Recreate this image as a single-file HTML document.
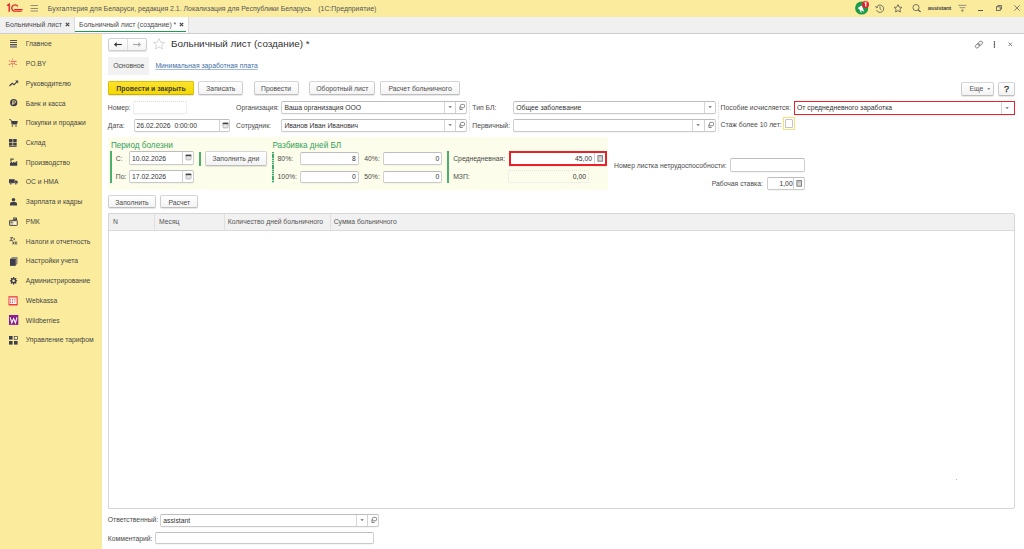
<!DOCTYPE html>
<html><head><meta charset="utf-8">
<style>
*{box-sizing:border-box;margin:0;padding:0}
html,body{width:1024px;height:549px;overflow:hidden;background:#fff;font-family:"Liberation Sans",sans-serif;position:relative}
.a{position:absolute}
.t{position:absolute;white-space:nowrap;font-size:6.8px;line-height:8px;color:#4a4a4a}
.inp{position:absolute;background:#fff;border:1px solid;border-color:#bdbdbd #cfcfcf #cacaca #cfcfcf;border-radius:2px;box-shadow:0 0.6px 0 rgba(0,0,0,.07)}
.inp .v{position:absolute;left:2px;top:0;bottom:0;display:flex;align-items:center;font-size:6.8px;color:#333;white-space:nowrap}
.inp .r{position:absolute;right:2px;top:0;bottom:0;display:flex;align-items:center;font-size:6.8px;color:#333;white-space:nowrap}
.btn{position:absolute;background:linear-gradient(#fff,#f3f3f3);border:1px solid;border-color:#d6d6d6 #cdcdcd #bdbdbd;border-radius:2px;box-shadow:0 1px 1px rgba(0,0,0,.10);display:flex;align-items:center;justify-content:center;font-size:6.8px;color:#4d4d4d;white-space:nowrap;padding-top:0.8px}
.sb{position:absolute;left:25.8px;font-size:6.77px;color:#454545;white-space:nowrap;line-height:8px}
.ic{position:absolute}

.dd{position:absolute;top:0;bottom:0;width:11px;border-left:1px solid #d6d6d6}
.op{position:absolute;top:0;bottom:0;width:11px;border-left:1px solid #d2d2d2}
.cal{position:absolute;top:0;bottom:0;width:11px;border-left:1px solid #d2d2d2}
.calc{position:absolute;top:0;bottom:0;width:11px;border-left:1px solid #d2d2d2}
.dsep{width:1px;background:repeating-linear-gradient(#dcdcdc 0 1.2px,transparent 1.2px 2.2px)}
.gbar{width:1.6px;background:#4caf6e}
.gdash{width:1.5px;background:repeating-linear-gradient(#46a96b 0 1.5px,#b9dcc4 1.5px 2.2px)}

</style></head><body>
<!-- header -->
<div class="a" style="left:0;top:0;width:1024px;height:16.5px;background:#fbec9d"></div>
<div class="t" style="left:47.8px;top:4.6px;color:#555;font-size:6.95px">Бухгалтерия для Беларуси, редакция 2.1. Локализация для Республики Беларусь</div><div class="t" style="left:318.3px;top:4.6px;color:#555;font-size:6.93px">(1С:Предприятие)</div>
<!-- tab bar -->
<div class="a" style="left:0;top:16.5px;width:1024px;height:17px;background:#f0f0f0;border-bottom:1px solid #cfcfcf"></div>
<div class="t" style="left:5.5px;top:20.7px;color:#4a4a4a;font-size:6.93px">Больничный лист</div>
<div class="a" style="left:74px;top:16.5px;width:115px;height:16.5px;background:#fff;border-left:1px solid #dcdcdc;border-right:1px solid #dcdcdc"></div>
<div class="t" style="left:79.1px;top:20.7px;color:#4a4a4a;font-size:6.93px">Больничный лист (создание) *</div>
<div class="a" style="left:75.2px;top:30.7px;width:111px;height:1.2px;background:#1f9a4a"></div>
<!-- sidebar -->
<div class="a" style="left:0;top:33.5px;width:101.5px;height:516px;background:#fbec9d"></div>
<div class="sb" style="top:40.30px">Главное</div>
<div class="sb" style="top:60.04px">РО.BY</div>
<div class="sb" style="top:79.78px">Руководителю</div>
<div class="sb" style="top:99.52px">Банк и касса</div>
<div class="sb" style="top:119.26px">Покупки и продажи</div>
<div class="sb" style="top:139.00px">Склад</div>
<div class="sb" style="top:158.74px">Производство</div>
<div class="sb" style="top:178.48px">ОС и НМА</div>
<div class="sb" style="top:198.22px">Зарплата и кадры</div>
<div class="sb" style="top:217.96px">РМК</div>
<div class="sb" style="top:237.70px">Налоги и отчетность</div>
<div class="sb" style="top:257.44px">Настройки учета</div>
<div class="sb" style="top:277.18px">Администрирование</div>
<div class="sb" style="top:296.92px">Webkassa</div>
<div class="sb" style="top:316.66px">Wildberries</div>
<div class="sb" style="top:336.40px">Управление тарифом</div>

<!-- FORM -->
<div class="a" style="left:108px;top:38.2px;width:39px;height:12.4px;border:1px solid #cfcfcf;border-radius:2px;background:linear-gradient(#fff,#f3f3f3);box-shadow:0 1px 1px rgba(0,0,0,.12)"></div>
<div class="a" style="left:127.3px;top:39.2px;width:1px;height:10.5px;background:#dedede"></div>
<div class="a" style="left:171px;top:38.2px;font-size:9.9px;color:#333;white-space:nowrap;line-height:11px">Больничный лист (создание) *</div>

<div class="a" style="left:108px;top:57px;width:41px;height:17.7px;background:#f2f2f2"></div>
<div class="t" style="left:113.2px;top:62px">Основное</div>
<div class="t" style="left:155.4px;top:62px;color:#3f6fa6;text-decoration:underline;text-decoration-color:#a3bcd8;text-underline-offset:1px">Минимальная заработная плата</div>

<div class="btn" style="left:108px;top:81.4px;width:86px;height:14px;background:linear-gradient(#fce22e,#f4d800);border-color:#dcc100 #dcc100 #c9af00;border-radius:1.5px;color:#3d3d3d;font-weight:bold;font-size:6.93px;padding-top:0.6px">Провести и закрыть</div>
<div class="btn" style="left:198.4px;top:81.4px;width:44.8px;height:14px">Записать</div>
<div class="btn" style="left:253.5px;top:81.4px;width:45.2px;height:14px">Провести</div>
<div class="btn" style="left:309.2px;top:81.4px;width:66.3px;height:14px">Оборотный лист</div>
<div class="btn" style="left:380.4px;top:81.4px;width:79.3px;height:14px">Расчет больничного</div>
<div class="btn" style="left:961px;top:81.6px;width:32.7px;height:14px;justify-content:flex-start;padding-left:7.5px;color:#555">Еще<svg width="6" height="4" viewBox="0 0 6 4" style="margin-left:3px"><path d="M1.4 1.2 H4.2 L2.8 2.8 Z" fill="#555"/></svg></div>
<div class="btn" style="left:998px;top:81.6px;width:16.8px;height:14px;font-size:9px;color:#222;-webkit-text-stroke:0.25px #222">?</div>


<!-- row 1 -->
<div class="t" style="left:107.8px;top:103.7px">Номер:</div>
<div class="inp" style="left:133.4px;top:101.1px;width:53.8px;height:13.2px;border:1px dotted #dedede"></div>
<div class="t" style="left:236.1px;top:103.7px">Организация:</div>
<div class="inp" style="left:281.4px;top:101.3px;width:185.6px;height:13px"><span class="v">Ваша организация ООО</span><i class="dd" style="left:161.8px"><svg width="11" height="13" viewBox="0 0 11 13" style="position:absolute;left:0;top:50%;margin-top:-6.5px"><path d="M3.4 5.2 H6.9 L5.15 7.1 Z" fill="#666"/></svg></i><i class="op" style="left:172.8px"><svg width="11" height="13" viewBox="0 0 11 13" style="position:absolute;left:0;top:50%;margin-top:-6.5px"><rect x="4.6" y="3.4" width="3.9" height="3.3" rx="0.9" fill="none" stroke="#6a6a6a" stroke-width="0.8"/><path d="M3.9 5.4 V8.4 H6.6" fill="none" stroke="#6a6a6a" stroke-width="0.9"/></svg></i></div>
<div class="a dsep" style="left:468.8px;top:101px;height:31px"></div>
<div class="t" style="left:472.3px;top:103.7px">Тип БЛ:</div>
<div class="inp" style="left:513.3px;top:101px;width:203px;height:13.3px"><span class="v">Общее заболевание</span><i class="dd" style="left:189.6px"><svg width="11" height="13" viewBox="0 0 11 13" style="position:absolute;left:0;top:50%;margin-top:-6.5px"><path d="M3.4 5.2 H6.9 L5.15 7.1 Z" fill="#666"/></svg></i></div>
<div class="a dsep" style="left:718px;top:101px;height:31px"></div>
<div class="t" style="left:720.6px;top:103.7px">Пособие исчисляется:</div>
<div class="inp" style="left:794px;top:101px;width:220.8px;height:14.2px;border:1.8px solid #e8212a;border-radius:0"><span class="v" style="top:-1px">От среднедневного заработка</span><i class="dd" style="left:206.2px"><svg width="11" height="13" viewBox="0 0 11 13" style="position:absolute;left:0;top:50%;margin-top:-6.5px"><path d="M3.4 5.2 H6.9 L5.15 7.1 Z" fill="#666"/></svg></i></div>
<!-- row 2 -->
<div class="t" style="left:107.8px;top:121.7px">Дата:</div>
<div class="inp" style="left:133.6px;top:119.4px;width:96.9px;height:12.8px"><span class="v">26.02.2026 &nbsp;0:00:00</span><i class="cal" style="left:84.5px"><svg width="11" height="13" viewBox="0 0 11 13" style="position:absolute;left:0;top:50%;margin-top:-6.5px"><rect x="2.9" y="3.9" width="5.2" height="5" rx="0.8" fill="#e6e6e6" stroke="#999" stroke-width="0.6"/><rect x="2.7" y="3.7" width="5.6" height="1.5" fill="#444"/></svg></i></div>
<div class="t" style="left:236.1px;top:121.7px">Сотрудник:</div>
<div class="inp" style="left:281.4px;top:119.3px;width:185.6px;height:13px"><span class="v">Иванов Иван Иванович</span><i class="dd" style="left:161.8px"><svg width="11" height="13" viewBox="0 0 11 13" style="position:absolute;left:0;top:50%;margin-top:-6.5px"><path d="M3.4 5.2 H6.9 L5.15 7.1 Z" fill="#666"/></svg></i><i class="op" style="left:172.8px"><svg width="11" height="13" viewBox="0 0 11 13" style="position:absolute;left:0;top:50%;margin-top:-6.5px"><rect x="4.6" y="3.4" width="3.9" height="3.3" rx="0.9" fill="none" stroke="#6a6a6a" stroke-width="0.8"/><path d="M3.9 5.4 V8.4 H6.6" fill="none" stroke="#6a6a6a" stroke-width="0.9"/></svg></i></div>
<div class="t" style="left:472.3px;top:121.7px">Первичный:</div>
<div class="inp" style="left:513.3px;top:119.3px;width:203.2px;height:13px"><i class="dd" style="left:178px"><svg width="11" height="13" viewBox="0 0 11 13" style="position:absolute;left:0;top:50%;margin-top:-6.5px"><path d="M3.4 5.2 H6.9 L5.15 7.1 Z" fill="#666"/></svg></i><i class="op" style="left:189.6px"><svg width="11" height="13" viewBox="0 0 11 13" style="position:absolute;left:0;top:50%;margin-top:-6.5px"><rect x="4.6" y="3.4" width="3.9" height="3.3" rx="0.9" fill="none" stroke="#6a6a6a" stroke-width="0.8"/><path d="M3.9 5.4 V8.4 H6.6" fill="none" stroke="#6a6a6a" stroke-width="0.9"/></svg></i></div>
<div class="t" style="left:720.6px;top:120.6px">Стаж более 10 лет:</div>
<div class="a" style="left:783px;top:117.3px;width:12px;height:12.6px;border:1px solid #f7df78;border-radius:0;background:#fff"></div>
<div class="a" style="left:785px;top:119.3px;width:8px;height:8.4px;border:1px solid #c4c4c4;border-radius:1px;background:#fff"></div>

<!-- group -->
<div class="a" style="left:107.9px;top:137.4px;width:500px;height:52.6px;background:#fdfdeb"></div>
<div class="a" style="left:110.9px;top:140.6px;font-size:8.18px;line-height:9px;color:#34a05a;white-space:nowrap">Период болезни</div>
<div class="a gbar" style="left:110.2px;top:151.4px;height:31.3px"></div>
<div class="t" style="left:115.8px;top:154.6px">С:</div>
<div class="inp" style="left:129px;top:151.4px;width:65px;height:13.2px"><span class="v" style="top:0.8px">10.02.2026</span><i class="cal" style="left:52.3px"><svg width="11" height="13" viewBox="0 0 11 13" style="position:absolute;left:0;top:50%;margin-top:-6.5px"><rect x="2.9" y="3.9" width="5.2" height="5" rx="0.8" fill="#e6e6e6" stroke="#999" stroke-width="0.6"/><rect x="2.7" y="3.7" width="5.6" height="1.5" fill="#444"/></svg></i></div>
<div class="t" style="left:115.8px;top:172.6px">По:</div>
<div class="inp" style="left:129px;top:170px;width:65px;height:12.7px"><span class="v">17.02.2026</span><i class="cal" style="left:52.3px"><svg width="11" height="13" viewBox="0 0 11 13" style="position:absolute;left:0;top:50%;margin-top:-6.5px"><rect x="2.9" y="3.9" width="5.2" height="5" rx="0.8" fill="#e6e6e6" stroke="#999" stroke-width="0.6"/><rect x="2.7" y="3.7" width="5.6" height="1.5" fill="#444"/></svg></i></div>
<div class="a gbar" style="left:199.3px;top:152px;height:14px"></div>
<div class="btn" style="left:205.1px;top:151.4px;width:61.5px;height:14.3px">Заполнить дни</div>

<div class="a" style="left:272.4px;top:140.6px;font-size:8.18px;line-height:9px;color:#34a05a;white-space:nowrap">Разбивка дней БЛ</div>
<div class="a gdash" style="left:272.2px;top:151.9px;height:31px"></div>
<div class="t" style="left:277.6px;top:154.6px">80%:</div>
<div class="inp" style="left:300.3px;top:151.9px;width:58.4px;height:12.8px"><span class="r">8</span></div>
<div class="t" style="left:277.6px;top:172.7px">100%:</div>
<div class="inp" style="left:300.3px;top:170.5px;width:58.4px;height:12.4px"><span class="r">0</span></div>
<div class="t" style="left:364.3px;top:154.6px">40%:</div>
<div class="inp" style="left:383.4px;top:151.9px;width:58.8px;height:12.8px"><span class="r">0</span></div>
<div class="t" style="left:364.3px;top:172.7px">50%:</div>
<div class="inp" style="left:383.4px;top:170.5px;width:58.8px;height:12.4px"><span class="r">0</span></div>

<div class="a gbar" style="left:447.4px;top:151.4px;height:31.6px"></div>
<div class="t" style="left:453.2px;top:154.6px">Среднедневная:</div>
<div class="inp" style="left:508.6px;top:150.9px;width:98px;height:15.6px;border:2px solid #e8212a;border-radius:0"><span class="r" style="right:12.6px">45,00</span><i class="calc" style="left:83.4px"><svg width="11" height="13" viewBox="0 0 11 13" style="position:absolute;left:0;top:50%;margin-top:-6.5px"><rect x="2.9" y="3.6" width="4.6" height="5.6" fill="#d8d8d8" stroke="#777" stroke-width="0.9"/><path d="M3.8 5 H6.6" stroke="#999" stroke-width="0.6"/></svg></i></div>
<div class="t" style="left:453.2px;top:172.5px">МЗП:</div>
<div class="inp" style="left:508.2px;top:170.2px;width:80.8px;height:12.5px;border:1px dotted #e2e2e2;background:#fdfdeb;box-shadow:none"><span class="r">0,00</span></div>

<div class="t" style="left:614px;top:161.8px">Номер листка нетрудоспособности:</div>
<div class="inp" style="left:730px;top:158.3px;width:74.7px;height:13.6px"></div>
<div class="t" style="left:711.7px;top:179.7px">Рабочая ставка:</div>
<div class="inp" style="left:767.1px;top:177.2px;width:37.6px;height:12.9px"><span class="r" style="right:11px">1,00</span><i class="calc" style="left:25.0px"><svg width="11" height="13" viewBox="0 0 11 13" style="position:absolute;left:0;top:50%;margin-top:-6.5px"><rect x="2.9" y="3.6" width="4.6" height="5.6" fill="#d8d8d8" stroke="#777" stroke-width="0.9"/><path d="M3.8 5 H6.6" stroke="#999" stroke-width="0.6"/></svg></i></div>

<div class="btn" style="left:107.8px;top:195.3px;width:48.3px;height:13.1px;padding-top:0.6px">Заполнить</div>
<div class="btn" style="left:160.3px;top:195.3px;width:38px;height:13.1px;padding-top:0.6px">Расчет</div>

<!-- table -->
<div class="a" style="left:108px;top:213.4px;width:906.6px;height:295.4px;border:1px solid #d6d6d6;border-radius:0 2px 2px 0;background:#fff"></div>
<div class="a" style="left:109px;top:214.4px;width:904.6px;height:16.4px;background:#f1f1f1;border-bottom:1px solid #dadada"></div>
<div class="a" style="left:154.4px;top:214.4px;width:1px;height:16px;background:#e0e0e0"></div>
<div class="a" style="left:223.5px;top:214.4px;width:1px;height:16px;background:#e0e0e0"></div>
<div class="a" style="left:329.7px;top:214.4px;width:1px;height:16px;background:#e0e0e0"></div>
<div class="t" style="left:113px;top:217.7px;color:#555">N</div>
<div class="t" style="left:159px;top:217.7px;color:#555">Месяц</div>
<div class="t" style="left:227.8px;top:217.7px;color:#555">Количество дней больничного</div>
<div class="t" style="left:333.7px;top:217.7px;color:#555">Сумма больничного</div>
<div class="a" style="left:956px;top:479px;width:1px;height:1px;background:#bbb"></div>

<div class="t" style="left:107.8px;top:516px">Ответственный:</div>
<div class="inp" style="left:160.3px;top:513.7px;width:218.7px;height:12.9px"><span class="v">assistant</span><i class="dd" style="left:195.0px"><svg width="11" height="13" viewBox="0 0 11 13" style="position:absolute;left:0;top:50%;margin-top:-6.5px"><path d="M3.4 5.2 H6.9 L5.15 7.1 Z" fill="#666"/></svg></i><i class="op" style="left:206.0px"><svg width="11" height="13" viewBox="0 0 11 13" style="position:absolute;left:0;top:50%;margin-top:-6.5px"><rect x="4.6" y="3.4" width="3.9" height="3.3" rx="0.9" fill="none" stroke="#6a6a6a" stroke-width="0.8"/><path d="M3.9 5.4 V8.4 H6.6" fill="none" stroke="#6a6a6a" stroke-width="0.9"/></svg></i></div>
<div class="t" style="left:107.8px;top:534.6px">Комментарий:</div>
<div class="inp" style="left:155.3px;top:531.9px;width:218.7px;height:12.5px"></div>

<!-- 1C logo -->
<svg class="ic" style="left:6px;top:3px" width="18" height="10" viewBox="0 0 18 10">
<path d="M1.2 2.6 L3.2 1.2 L3.2 8.8" fill="none" stroke="#e3202c" stroke-width="1.4"/>
<path d="M11.8 3.3 A3.3 3.3 0 1 0 8.3 8.3" fill="none" stroke="#e3202c" stroke-width="1.3"/>
<path d="M8.2 6.6 H16.6 M8.2 8.3 H15.8" stroke="#e3202c" stroke-width="1.1"/>
</svg>
<!-- hamburger -->
<svg class="ic" style="left:29.5px;top:4px" width="9" height="9" viewBox="0 0 9 9">
<path d="M0.5 1.5H8M0.5 4.5H8M0.5 7H8" stroke="#8b826a" stroke-width="0.9"/>
</svg>
<!-- header right icons -->
<svg class="ic" style="left:854px;top:0px" width="16" height="16" viewBox="0 0 16 16">
<circle cx="7.7" cy="8" r="6.6" fill="#1e9a4a"/>
<path d="M3.6 8 L7.8 5.6 L10.2 11.8 L5.6 9.8 Z" fill="#fff"/>
<path d="M6.4 10 L7.2 12.6" stroke="#fff" stroke-width="1"/>
<circle cx="11.5" cy="4.5" r="3.5" fill="#e4202c"/>
<path d="M10.7 3.3 L11.8 2.4 V6.6" stroke="#fff" stroke-width="1.2" fill="none"/>
</svg>
<svg class="ic" style="left:875px;top:4px" width="10" height="9" viewBox="0 0 10 9">
<path d="M1.6 3.2 A3.7 3.7 0 1 1 1.5 6" fill="none" stroke="#555" stroke-width="0.8"/>
<path d="M0.6 2.2 L1.5 3.8 L3 3" fill="none" stroke="#555" stroke-width="0.8"/>
<path d="M5 2.3 V4.8 L6.4 6.1" fill="none" stroke="#555" stroke-width="0.8"/>
</svg>
<svg class="ic" style="left:893px;top:3.8px" width="10" height="9" viewBox="0 0 10 9">
<path d="M5 0.6 L6.2 3.1 L8.9 3.4 L6.9 5.2 L7.4 8 L5 6.6 L2.6 8 L3.1 5.2 L1.1 3.4 L3.8 3.1 Z" fill="none" stroke="#555" stroke-width="0.8" stroke-linejoin="round"/>
</svg>
<svg class="ic" style="left:911.5px;top:4.3px" width="10" height="9" viewBox="0 0 10 9">
<circle cx="4" cy="3.6" r="3.1" fill="none" stroke="#555" stroke-width="0.8"/>
<path d="M6.2 5.8 L8.6 7.8" stroke="#444" stroke-width="1.1"/>
</svg>
<div class="a" style="left:927.7px;top:3.6px;font-size:6px;font-weight:bold;line-height:8px;letter-spacing:-0.3px;color:#4a4a4a;white-space:nowrap">assistant</div>
<svg class="ic" style="left:957.5px;top:4px" width="9" height="9" viewBox="0 0 9 9">
<path d="M0.4 1.3H8.4M1.6 3.7H7.2M3.4 6H5.4" stroke="#777" stroke-width="0.8"/>
<rect x="3.6" y="6.4" width="1.6" height="1" fill="#444"/>
</svg>
<div class="a" style="left:978px;top:9.8px;width:5px;height:0.9px;background:#555"></div>
<svg class="ic" style="left:995.5px;top:5.3px" width="6" height="6" viewBox="0 0 6 6">
<rect x="0.5" y="1.8" width="3.7" height="3.7" fill="none" stroke="#555" stroke-width="0.8"/>
<path d="M1.8 1.8 V0.5 H5.5 V4.2 H4.2" fill="none" stroke="#555" stroke-width="0.8"/>
</svg>
<svg class="ic" style="left:1013.5px;top:5.2px" width="6" height="6" viewBox="0 0 6 6">
<path d="M0.3 0.3 L5.7 5.7 M5.7 0.3 L0.3 5.7" stroke="#666" stroke-width="0.8"/>
</svg>
<!-- tab close -->
<svg class="ic" style="left:64.6px;top:22.4px" width="5" height="5" viewBox="0 0 5 5">
<path d="M0.8 0.8 L4.2 4.2 M4.2 0.8 L0.8 4.2" stroke="#444" stroke-width="1.2"/>
</svg>
<svg class="ic" style="left:179.4px;top:22.4px" width="5" height="5" viewBox="0 0 5 5">
<path d="M0.8 0.8 L4.2 4.2 M4.2 0.8 L0.8 4.2" stroke="#444" stroke-width="1.2"/>
</svg>

<!-- sidebar icons -->
<svg class="ic" style="left:10px;top:40px" width="8" height="8" viewBox="0 0 8 8">
<path d="M0 0.5H7M0 2.5H7M0 4.5H7" stroke="#3e3d4e" stroke-width="0.9"/>
<rect x="0" y="5.4" width="7" height="2.4" fill="#8c8a7a"/>
</svg>
<svg class="ic" style="left:8px;top:58px" width="10" height="10" viewBox="0 0 10 10" style="">
<g fill="#ea4a58" opacity="0.85">
<rect x="4" y="0.6" width="1" height="1"/>
<rect x="0.9" y="2.3" width="1" height="1.2"/>
<rect x="2.8" y="2.9" width="5.8" height="1"/>
<path d="M2.4 5.6 L4.6 4.4 L5 5.2 L2.8 6.4 Z"/>
<circle cx="6.2" cy="5.4" r="0.8"/>
<circle cx="1.4" cy="6.5" r="0.8"/>
<rect x="4" y="5.8" width="1.1" height="1.1"/>
<rect x="7.2" y="6" width="1.6" height="1"/>
<rect x="4" y="7.9" width="1" height="1"/>
</g></svg>
<svg class="ic" style="left:9px;top:80px" width="10" height="7" viewBox="0 0 10 7">
<path d="M0.5 6 L3.2 3.4 L5 4.8 L8 1.6" fill="none" stroke="#3e3d4e" stroke-width="1.2"/>
<path d="M6.2 0.6 L9.2 0.6 L9.2 3.6 Z" fill="#3e3d4e"/>
</svg>
<svg class="ic" style="left:9.8px;top:99.3px" width="8" height="8" viewBox="0 0 8 8">
<circle cx="3.7" cy="3.7" r="3.6" fill="#3e3d4e"/>
<path d="M2.8 6 V1.8 H4.3 A1.2 1.2 0 0 1 4.3 4.2 H2" fill="none" stroke="#fbec9d" stroke-width="0.8"/>
</svg>
<svg class="ic" style="left:9px;top:119px" width="9" height="8" viewBox="0 0 9 8">
<path d="M0.2 0.6 H1.6 L2.4 2" fill="none" stroke="#3e3d4e" stroke-width="0.9"/>
<path d="M2 2 H8.8 L8 5.6 H2.6 Z" fill="#3e3d4e"/>
<circle cx="3.4" cy="7" r="0.8" fill="#3e3d4e"/><circle cx="7" cy="7" r="0.8" fill="#3e3d4e"/>
</svg>
<svg class="ic" style="left:9.2px;top:138.8px" width="8" height="8" viewBox="0 0 8 8">
<rect x="0" y="0" width="3.5" height="3" fill="#3e3d4e"/><rect x="4.2" y="0" width="3.5" height="3" fill="#3e3d4e"/>
<rect x="0" y="3.6" width="3.5" height="3" fill="#3e3d4e"/><rect x="4.2" y="3.6" width="3.5" height="3" fill="#3e3d4e"/>
<rect x="0" y="7" width="7.7" height="0.8" fill="#3e3d4e"/>
</svg>
<svg class="ic" style="left:9.8px;top:157.8px" width="8" height="8" viewBox="0 0 8 8">
<path d="M0 7.8 V5 L1.8 3.6 L2.2 5 L4.2 3.4 L4.6 5 L6.6 3.2 L7.2 3.2 V7.8 Z" fill="#3e3d4e"/>
<path d="M0.3 0.4 H3.8 V1.8 H1.6 V3.4 H0.3 Z" fill="#5a5648"/>
</svg>
<svg class="ic" style="left:9px;top:178.8px" width="9" height="6" viewBox="0 0 9 6">
<rect x="0" y="0.2" width="5.6" height="4" fill="#3e3d4e"/>
<path d="M5.8 1.4 H7.6 L8.8 2.8 V4.2 H5.8 Z" fill="#3e3d4e"/>
<circle cx="1.8" cy="4.8" r="1" fill="#3e3d4e" stroke="#fbec9d" stroke-width="0.4"/><circle cx="6.8" cy="4.8" r="1" fill="#3e3d4e" stroke="#fbec9d" stroke-width="0.4"/>
</svg>
<svg class="ic" style="left:10px;top:198px" width="7" height="8" viewBox="0 0 7 8">
<circle cx="3.5" cy="1.8" r="1.8" fill="#3e3d4e"/>
<path d="M0 7.6 V5.6 Q0 4 2 4 H5 Q7 4 7 5.6 V7.6 Z" fill="#3e3d4e"/>
</svg>
<svg class="ic" style="left:9px;top:217px" width="9" height="9" viewBox="0 0 9 9">
<path d="M4.2 0.4 H7.4 Q8 0.4 8 1.2 V3.4 H4.2 Z" fill="#3e3d4e"/>
<path d="M4.8 1.6 H7.2" stroke="#fbec9d" stroke-width="0.5"/>
<rect x="0.5" y="3.4" width="7.8" height="5.1" rx="0.6" fill="#c9c2a0" stroke="#4a4846" stroke-width="0.9"/>
<rect x="4.4" y="4.6" width="3" height="3.2" fill="#fff6d0"/>
<rect x="1.4" y="4.6" width="2.2" height="1.4" fill="#7a7668"/>
</svg>
<svg class="ic" style="left:9.3px;top:237.2px" width="9" height="8" viewBox="0 0 9 8">
<g fill="none" stroke="#3e3d4e" stroke-width="0.75">
<path d="M1.2 0.6 H4 L1.6 2.2 L3.6 3.6 H0.6"/>
<path d="M4.6 1.2 L5.8 3.2 M5.8 1.2 L4.6 3.2" stroke-width="0.6"/>
<path d="M3.6 4.6 L5 7.4 M5 4.6 L3.6 7.4"/>
<path d="M8.2 7 Q6 7.8 5.9 6 Q6 4.6 7.4 4.8 Q8.2 5.2 7.6 5.9 H6.2"/>
</g></svg>
<svg class="ic" style="left:9.5px;top:256.5px" width="8" height="9" viewBox="0 0 8 9">
<path d="M0 2 L2 0 H7.5 V6.5 L5.5 8.8 H0 Z" fill="#8c8a7a"/>
<rect x="0" y="2" width="5.6" height="6.8" fill="#3e3d4e"/>
</svg>
<svg class="ic" style="left:10px;top:277px" width="8" height="8" viewBox="0 0 8 8">
<g fill="#3e3d4e"><circle cx="3.6" cy="3.8" r="2.7"/>
<rect x="3" y="0" width="1.2" height="7.6"/><rect x="0" y="3.2" width="7.2" height="1.2"/>
<rect x="3" y="0" width="1.2" height="7.6" transform="rotate(45 3.6 3.8)"/><rect x="3" y="0" width="1.2" height="7.6" transform="rotate(-45 3.6 3.8)"/></g>
<circle cx="3.6" cy="3.8" r="1.3" fill="#fbec9d"/>
</svg>
<svg class="ic" style="left:8.4px;top:295.6px" width="10" height="10" viewBox="0 0 10 10">
<rect x="0.5" y="0.3" width="9.1" height="9.1" fill="#e8242c"/>
<rect x="1.4" y="1.5" width="7.2" height="6.6" fill="#fff"/>
<path d="M2.2 2.4 H7.8" stroke="#f0c8a8" stroke-width="0.6"/>
<path d="M2.4 3.2 V7.6 M4.6 3.2 V7.6 M6.9 3.2 V6.4" stroke="#e8242c" stroke-width="0.9" stroke-dasharray="0.9 0.5"/>
<path d="M0.2 1 V9" stroke="#f4a0a0" stroke-width="0.6" stroke-dasharray="0.8 0.6"/>
</svg>
<svg class="ic" style="left:8.8px;top:315.1px" width="10" height="10" viewBox="0 0 10 10">
<rect x="0" y="0" width="9.3" height="9.9" fill="#8b1c92"/>
<path d="M1.2 2.4 L2.8 7.8 L4.6 3.6 L6.4 7.8 L8 2.4" fill="none" stroke="#fff" stroke-width="1.1"/>
</svg>
<svg class="ic" style="left:9.2px;top:335.9px" width="9" height="9" viewBox="0 0 9 9">
<rect x="0" y="0" width="3.6" height="3.6" fill="#3e3d4e"/>
<rect x="5.2" y="0.4" width="3.2" height="3.2" fill="none" stroke="#3e3d4e" stroke-width="0.7"/>
<rect x="0" y="5" width="3.6" height="3.6" fill="#3e3d4e"/><rect x="5" y="5" width="3.6" height="3.6" fill="#3e3d4e"/>
</svg>

<!-- nav arrows -->
<svg class="ic" style="left:114px;top:42px" width="8" height="5" viewBox="0 0 8 5">
<path d="M7.8 2.5 H1.5" stroke="#333" stroke-width="1.1"/><path d="M0 2.5 L2.6 0 V5 Z" fill="#333"/>
</svg>
<svg class="ic" style="left:133.2px;top:42px" width="8" height="5" viewBox="0 0 8 5">
<path d="M0 2.5 H6.5" stroke="#a8a8a8" stroke-width="1.1"/><path d="M8 2.5 L5.4 0 V5 Z" fill="#a8a8a8"/>
</svg>
<svg class="ic" style="left:153px;top:37.9px" width="12" height="12" viewBox="0 0 12 12">
<path d="M6 0.6 L7.6 4.1 L11.4 4.5 L8.6 7 L9.4 10.9 L6 8.9 L2.6 10.9 L3.4 7 L0.6 4.5 L4.4 4.1 Z" fill="none" stroke="#cdcdcd" stroke-width="0.8" stroke-linejoin="round"/>
</svg>
<!-- form right icons -->
<svg class="ic" style="left:973.5px;top:39.5px" width="10" height="9" viewBox="0 0 10 9">
<g fill="none" stroke="#666" stroke-width="0.75" transform="rotate(-40 5 4.5)">
<rect x="0.6" y="3" width="5" height="3.2" rx="1.6"/>
<rect x="4.2" y="2.8" width="5" height="3.2" rx="1.6"/>
</g></svg>
<svg class="ic" style="left:993px;top:40.5px" width="3" height="7" viewBox="0 0 3 7">
<rect x="0.9" y="0.4" width="1.1" height="6.2" fill="#888"/>
<rect x="0.8" y="0.3" width="1.3" height="1.2" fill="#555"/><rect x="0.8" y="2.9" width="1.3" height="1.2" fill="#555"/><rect x="0.8" y="5.5" width="1.3" height="1.2" fill="#555"/>
</svg>
<svg class="ic" style="left:1008px;top:42px" width="5" height="5" viewBox="0 0 5 5">
<path d="M0.6 0.6 L4 4 M4 0.6 L0.6 4" stroke="#777" stroke-width="0.9"/>
</svg>
</body></html>
